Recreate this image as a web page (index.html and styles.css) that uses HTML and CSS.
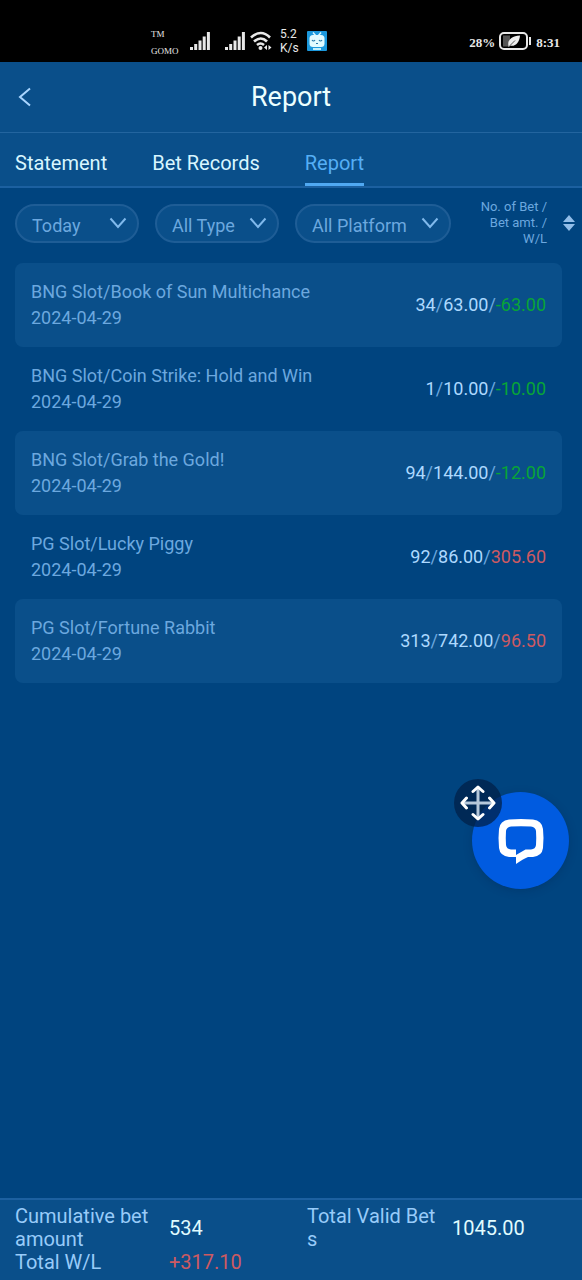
FILE: index.html
```html
<!DOCTYPE html>
<html lang="en">
<head>
<meta charset="utf-8">
<meta name="viewport" content="width=device-width, initial-scale=1">
<title>Report</title>
<link rel="stylesheet" href="styles.css">
</head>
<body>
<div class="status">
  <div class="status-left">
    <div class="carrier"><span>TM</span><span>GOMO</span></div>
    <svg class="signal" width="20" height="20" viewBox="0 0 20 20"><path d="M1.500 16v3M5.700 13v6M10 9.500v9.500M14.200 5.500v13.500M18.400 1v18"/></svg>
    <svg class="signal signal-second" width="20" height="20" viewBox="0 0 20 20"><path d="M1.500 16v3M5.700 13v6M10 9.500v9.500M14.200 5.500v13.500M18.400 1v18"/></svg>
    <svg class="wifi" width="22" height="20" viewBox="0 0 22 20"><path d="M1 6.500Q11-2.500 20 6.500M4 10.500Q11 4.500 17 10.500M7 14Q10.500 11 14 14"/><circle cx="10.500" cy="17" r="2"/><path class="fill" d="M14 16.500l3-2.500v5zM21.500 16.500l-3-2.500v5z"/></svg>
    <div class="speed"><span>5.2</span><span>K/s</span></div>
    <svg width="20" height="20" viewBox="0 0 20 20"><rect width="20" height="20" rx="1" fill="#1c98dc"/><path d="M6 1.500l2.500 3M14 1.500l-2.500 3" stroke="#d8f6ff" stroke-width="1.500"/><rect x="2.500" y="4" width="15" height="12" rx="3.500" fill="#e2fbff"/><path d="M5 9q1.500 2 3 0M12 9q1.500 2 3 0" fill="none" stroke="#2878a8" stroke-width="1.200"/><path d="M9 12.500h2" stroke="#2878a8"/><path d="M6 17h8v2H6z" fill="#c2effc"/></svg>
  </div>
  <div class="status-right">
    <span>28%</span>
    <svg width="33" height="18" viewBox="0 0 33 18"><rect x="1" y="1" width="27" height="16" rx="4" fill="none" stroke="#e8e8e8" stroke-width="2"/><path d="M4 3.500h7v11H4z" fill="#555"/><path d="M9.500 14C8 8 13 4 21 3.500C20.500 11 16 15 11 13.500L9.500 15z" fill="#eee"/><path d="M11 13.500l5-5" stroke="#555"/><path d="M31 5v8" stroke="#e8e8e8" stroke-width="2"/></svg>
    <span>8:31</span>
  </div>
</div>
<header class="header">
  <button class="back" type="button" aria-label="Back"><svg width="14" height="20" viewBox="0 0 14 20"><path d="M12 1.500L2 10l10 8.500" fill="none" stroke="currentColor" stroke-width="2"/></svg></button>
  <h1>Report</h1>
</header>
<nav class="tabs">
  <a class="tab" href="#statement">Statement</a>
  <a class="tab" href="#bets">Bet Records</a>
  <a class="tab active" href="#report" aria-current="page">Report</a>
</nav>
<main class="main">
  <form class="filters">
    <label class="pill"><select aria-label="Date"><option>Today</option></select><svg width="18" height="12" viewBox="0 0 18 12"><path d="M1.500 1.500L9 10l7.500-8.500"/></svg></label>
    <label class="pill"><select aria-label="Type"><option>All Type</option></select><svg width="18" height="12" viewBox="0 0 18 12"><path d="M1.500 1.500L9 10l7.500-8.500"/></svg></label>
    <label class="pill wide"><select aria-label="Platform"><option>All Platform</option></select><svg width="18" height="12" viewBox="0 0 18 12"><path d="M1.500 1.500L9 10l7.500-8.500"/></svg></label>
    <button class="sort" type="button"><span>No. of Bet /<br>Bet amt. /<br>W/L</span><svg width="12" height="16" viewBox="0 0 12 16"><path d="M6 0l6 7H0zM0 9h12l-6 7z" fill="currentColor"/></svg></button>
  </form>
  <ul class="list">
    <li class="row"><div>BNG Slot/Book of Sun Multichance<br>2024-04-29</div><div><b>34</b>/<b>63.00</b>/<span class="green">-63.00</span></div></li>
    <li class="row"><div>BNG Slot/Coin Strike: Hold and Win<br>2024-04-29</div><div><b>1</b>/<b>10.00</b>/<span class="green">-10.00</span></div></li>
    <li class="row"><div>BNG Slot/Grab the Gold!<br>2024-04-29</div><div><b>94</b>/<b>144.00</b>/<span class="green">-12.00</span></div></li>
    <li class="row"><div>PG Slot/Lucky Piggy<br>2024-04-29</div><div><b>92</b>/<b>86.00</b>/<span class="red">305.60</span></div></li>
    <li class="row"><div>PG Slot/Fortune Rabbit<br>2024-04-29</div><div><b>313</b>/<b>742.00</b>/<span class="red">96.50</span></div></li>
  </ul>
</main>
<footer class="totals">
  <span class="label">Cumulative bet amount</span><span class="value">534</span>
  <span class="label">Total Valid Bets</span><span class="value">1045.00</span>
  <span class="label">Total W/L</span><span class="red">+317.10</span>
</footer>
<div class="chat">
  <button class="chat-open" type="button" aria-label="Open chat"><svg width="46" height="46" viewBox="0 0 46 46"><path fill="#fff" fill-rule="evenodd" d="M11 1.500Q23 .5 35 1.500Q44 2.500 45 11Q46 20 45 30Q44 38 35 39H30Q25 41 18 46V39H11Q2 38 1 30Q0 20 1 11Q2 2.500 11 1.500ZM13 8.500Q8.500 9 8 13Q7.500 20 8 27Q8.500 31 13 31.500H18V37L27.500 31.500H33Q37.500 31 38 27Q38.500 20 38 13Q37.500 9 33 8.500Q23 8 13 8.500Z"/></svg></button>
  <button class="chat-move" type="button" aria-label="Move chat"><svg width="36" height="36" viewBox="0 0 36 36" fill="none"><path d="M18 3v30M3 18h30" stroke="#b5c8db" stroke-width="3"/><path d="M13 6.500L18 2l5 4.500M13 29.500l5 4.500 5-4.500M6.500 13L2 18l4.500 5M29.500 13l4.500 5-4.500 5" stroke="#fff" stroke-width="3" stroke-linecap="round" stroke-linejoin="round"/></svg></button>
</div>
</body>
</html>
```
FILE: styles.css
```css
* { box-sizing: border-box; }
body {
  margin: 0;
  min-height: 100vh;
  display: flex;
  flex-direction: column;
  background: #00447f;
  color: #6ca8df;
  font-family: Roboto, sans-serif;
  font-size: 18px;
}
button, select {
  margin: 0;
  padding: 0;
  border: 0;
  background: none;
  color: inherit;
  font: inherit;
}
.status {
  display: flex;
  justify-content: space-between;
  align-items: center;
  height: 62px;
  padding: 20px 22px 0 151px;
  background: #000;
  color: #e8e8e8;
}
.status-left, .status-right { display: flex; align-items: center; }
.carrier {
  display: flex;
  flex-direction: column;
  width: 39px;
  padding-top: 3px;
  font: 9px/17px "Liberation Serif", serif;
}
.signal { fill: none; stroke: #e8e8e8; stroke-width: 3; }
.signal-second { margin-left: 15px; }
.wifi { margin: 0 8px 0 5px; fill: #e8e8e8; }
.wifi path { fill: none; stroke: #e8e8e8; stroke-width: 2.6; }
.wifi .fill { fill: #e8e8e8; stroke: none; }
.speed {
  display: flex;
  flex-direction: column;
  width: 27px;
  font-size: 12px;
  line-height: 14px;
}
.status-right { gap: 4px; font: bold 13px/20px "Liberation Serif", serif; }
.status-right span { padding-top: 4px; }
.header {
  display: grid;
  grid-template-columns: 40px 1fr 40px;
  align-items: center;
  height: 71px;
  background: #0a4f8a;
  border-bottom: 1px solid #23659f;
}
.header h1 {
  margin: 0;
  color: #ecffff;
  font-size: 27px;
  font-weight: 400;
  line-height: 32px;
  text-align: center;
}
.back { height: 40px; padding-left: 10px; color: #a9d5ff; }
.back svg { display: block; margin: 0 auto; }
.tabs {
  display: flex;
  gap: 45px;
  height: 55px;
  padding: 0 15px;
  background: #0a4f8a;
  border-bottom: 2px solid #1c60a0;
}
.tab {
  padding-top: 3px;
  border-bottom: 3px solid transparent;
  color: #d8f6ff;
  font-size: 20px;
  line-height: 54px;
  text-decoration: none;
}
.tab.active { border-color: #50a9f2; color: #55aef5; }
.main { flex: 1; }
.filters {
  display: flex;
  align-items: center;
  gap: 16px;
  padding: 11px 7px 16px 15px;
}
.pill {
  display: flex;
  align-items: center;
  flex: 0 0 124px;
  height: 39px;
  padding: 0 10px 0 15px;
  background: #0a4f8a;
  border: 2px solid #1e5d96;
  border-radius: 20px;
}
.pill.wide { flex-basis: 156px; }
.pill select { flex: 1; min-width: 0; height: 35px; padding-top: 5px; appearance: none; }
.pill svg { fill: none; stroke: #80b9ec; stroke-width: 2; }
.sort {
  display: flex;
  align-items: center;
  justify-content: flex-end;
  flex: 1;
  gap: 16px;
  font-size: 13px;
  line-height: 16px;
  text-align: right;
  white-space: nowrap;
}
.sort svg { color: #91bde8; }
.list { margin: 0; padding: 0 20px 0 15px; list-style: none; }
.row {
  display: flex;
  justify-content: space-between;
  align-items: center;
  height: 84px;
  padding: 0 16px;
  border-radius: 8px;
  line-height: 26px;
}
.row:nth-child(odd) { background: #0a4f8a; }
.row b { color: #add9ff; font-weight: 400; }
.green { color: #08a437; }
.red { color: #cd5a62; }
.totals {
  display: grid;
  grid-template-columns: 154fr 138fr 145fr 123fr;
  align-items: center;
  padding: 5px 7px 6px 15px;
  background: #0a4f8a;
  border-top: 2px solid #1c60a0;
  color: #98cbf9;
  font-size: 20px;
  line-height: 23px;
}
.label { max-width: 134px; word-break: break-all; }
.value { color: #e0fcff; }
.totals .red { color: #cd5a62; }
.chat { position: fixed; right: 13px; bottom: 391px; }
.chat-open {
  display: grid;
  place-items: center;
  width: 97px;
  height: 97px;
  border-radius: 50%;
  background: #005be0;
  box-shadow: 0 2px 8px rgba(0, 30, 70, 0.25);
}
.chat-move {
  position: absolute;
  top: -13px;
  left: -18px;
  display: grid;
  place-items: center;
  width: 48px;
  height: 48px;
  border-radius: 50%;
  background: rgba(0, 32, 72, 0.75);
}
```
